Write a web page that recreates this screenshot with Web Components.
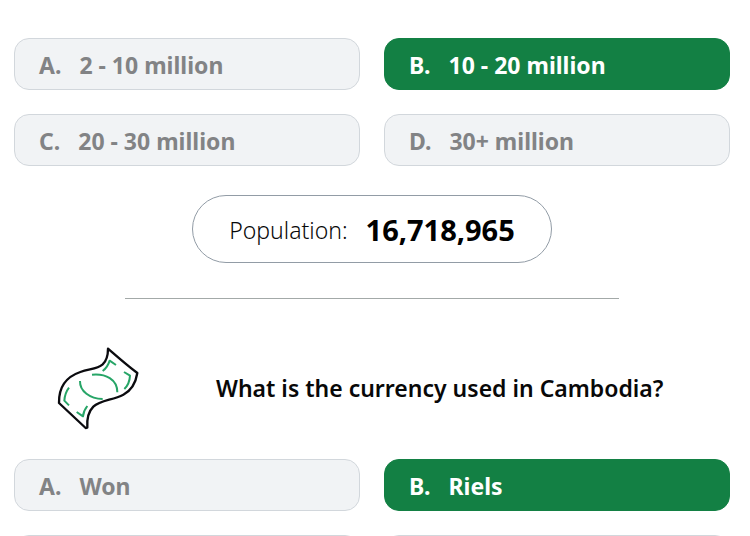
<!DOCTYPE html>
<html lang="en">
<head>
<meta charset="utf-8">
<meta name="viewport" content="width=device-width, initial-scale=1">
<title>Cambodia quiz</title>
<style>
body { margin: 0; background: #fff; color: #080808; font-family: "Noto Sans", "Open Sans", sans-serif; overflow-x: hidden; }
</style>
</head>
<body>
<quiz-page>
  <answer-grid>
    <answer-option letter="A.">2 - 10 million</answer-option>
    <answer-option letter="B." correct>10 - 20 million</answer-option>
    <answer-option letter="C.">20 - 30 million</answer-option>
    <answer-option letter="D.">30+ million</answer-option>
  </answer-grid>
  <fact-pill label="Population:">16,718,965</fact-pill>
  <section-rule></section-rule>
  <quiz-question><bank-note slot="icon"></bank-note>What is the currency used in Cambodia?</quiz-question>
  <answer-grid>
    <answer-option letter="A.">Won</answer-option>
    <answer-option letter="B." correct>Riels</answer-option>
    <answer-option></answer-option>
    <answer-option></answer-option>
  </answer-grid>
</quiz-page>
<script>
const define = (name, render) => customElements.define(name, class extends HTMLElement {
  connectedCallback() {
    if (!this.shadowRoot) this.attachShadow({ mode: "open" }).innerHTML = render(this);
  }
});

define("quiz-page", () => `
  <style>
    :host { display: block; }
    main { display: flex; flex-direction: column; padding: 38px 20px 24px 14px; }
  </style>
  <main><slot></slot></main>`);

define("answer-grid", () => `
  <style>
    :host { display: grid; grid-template-columns: 1fr 1fr; gap: 24px; }
  </style>
  <slot></slot>`);

define("answer-option", el => `
  <style>
    :host { display: block; }
    button {
      display: flex; align-items: center; gap: 18px; width: 100%; height: 52px;
      padding: 2px 24px 0; box-sizing: border-box;
      border: 1px solid #d2d7dc; border-radius: 15px;
      background: #f1f3f5; color: #828385;
      font: 700 23px/30px "Noto Sans", "Open Sans", sans-serif; text-align: left;
    }
    :host([correct]) button { background: #138044; border-color: #138044; color: #fff; }
  </style>
  <button type="button"><span>${el.getAttribute("letter") || ""}</span><span><slot></slot></span></button>`);

define("fact-pill", el => `
  <style>
    :host {
      display: flex; align-items: center; justify-content: center; gap: 18px; align-self: center;
      height: 68px; padding: 2px 36px 0; margin-top: 29px; box-sizing: border-box;
      border: 1px solid #929ca6; border-radius: 34px; font-size: 23px; line-height: 32px;
    }
    span { font-weight: 300; }
    strong { font-size: 29px; font-weight: 700; color: #000; }
  </style>
  <span>${el.getAttribute("label")}</span><strong><slot></slot></strong>`);

define("section-rule", () => `
  <style>
    :host { display: block; align-self: center; width: 69%; margin-top: 35px; }
    hr { margin: 0; border: 0; height: 1px; background: #a3a9a8; }
  </style>
  <hr>`);

define("quiz-question", () => `
  <style>
    :host { display: flex; align-items: center; margin: 46px 0 27px; padding-left: 42px; gap: 75px; }
    h2 { margin: 0; padding-bottom: 2px; font-size: 23px; line-height: 30px; font-weight: 600; white-space: nowrap; }
  </style>
  <slot name="icon"></slot><h2><slot></slot></h2>`);

define("bank-note", () => `
  <style>
    :host { display: block; flex: none; }
    svg { display: block; width: 85px; height: 87px; }
  </style>
  <svg viewBox="50 30 255 261" fill="none" stroke-linecap="round" stroke-linejoin="round" aria-hidden="true">
    <path stroke="#0b0b0f" stroke-width="7" d="M206 41C236 67 264 92 294 114C289 145 277 166 252 179C220 196 184 195 162 215C147 230 142 249 144 278L139 279L59 204C58 157 82 125 123 111C151 101 173 103 190 88C204 75 206 60 206 41Z"/>
    <g stroke="#27a567" stroke-width="6" stroke-linecap="butt">
      <path d="M158 119C199 115 234 133 234 172"/>
      <path d="M122 138C121 169 152 191 190 192"/>
      <path d="M190 108C204 98 207 90 211 77L230 90"/>
      <path d="M254 111L272 122C271 140 267 151 255 162"/>
      <path d="M89 158C79 171 76 181 75 197L89 211"/>
      <path d="M144 213C136 223 132 232 131 244L112 231"/>
    </g>
  </svg>`);
</script>
</body>
</html>
